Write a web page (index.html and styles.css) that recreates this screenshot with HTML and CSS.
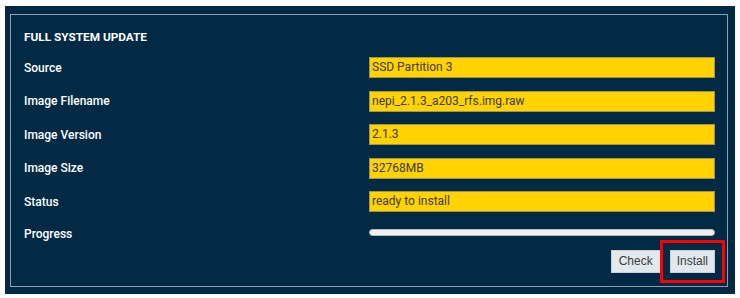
FILE: index.html
```html
<!DOCTYPE html>
<html>
<head>
<meta charset="utf-8">
<link rel="stylesheet" href="styles.css">
</head>
<body>
<div class="frame">
  <div class="panel">
    <div class="title">FULL SYSTEM UPDATE</div>
    <div class="rows">
      <div class="row"><span class="label">Source</span><span class="field">SSD Partition 3</span></div>
      <div class="row"><span class="label">Image Filename</span><span class="field">nepi_2.1.3_a203_rfs.img.raw</span></div>
      <div class="row"><span class="label">Image Version</span><span class="field">2.1.3</span></div>
      <div class="row"><span class="label">Image Size</span><span class="field">32768MB</span></div>
      <div class="row"><span class="label">Status</span><span class="field">ready to install</span></div>
      <div class="row progress-row"><span class="label progress-label">Progress</span><span class="progress"></span></div>
    </div>
    <div class="actions">
      <button class="btn">Check</button>
      <span class="highlight"><button class="btn">Install</button></span>
    </div>
  </div>
</div>
</body>
</html>
```
FILE: styles.css
```css
html, body {
  margin: 0;
  padding: 0;
  background: #ffffff;
}
body {
  padding: 6px 5px 4px 5px;
  font-family: Roboto, "Liberation Sans", sans-serif;
}
.frame {
  background: #032a45;
  padding: 8px 7px 7px 5px;
  height: 288px;
  box-sizing: border-box;
}
.panel {
  border: 1px solid #8d9eae;
  height: 273px;
  box-sizing: border-box;
  padding: 14px 12px 0 13px;
}
.title {
  color: #ffffff;
  font-weight: 700;
  font-size: 11.8px;
  line-height: 16px;
  height: 16px;
  margin-bottom: 12px;
}
.rows {
  display: flex;
  flex-direction: column;
  gap: 12.5px;
}
.row {
  display: flex;
  align-items: center;
  height: 21px;
}
.progress-row {
  height: 16px;
}
.label {
  width: 345px;
  flex: none;
  color: #ffffff;
  font-size: 12px;
  font-weight: 500;
}
.progress-label {
  padding-top: 3px;
}
.field {
  flex: 1;
  height: 21px;
  box-sizing: border-box;
  background: #ffd200;
  border: 1px solid #a39550;
  color: #3a3a2a;
  font-size: 12px;
  line-height: 19px;
  padding-left: 2px;
}
.progress {
  flex: 1;
  height: 7px;
  box-sizing: border-box;
  background: #f0f0f0;
  border: 1px solid #b8b8b8;
  border-radius: 4px;
}
.actions {
  display: flex;
  justify-content: flex-end;
  align-items: center;
  gap: 9px;
  margin-top: 9px;
}
.btn {
  font-family: "Liberation Sans", Arial, sans-serif;
  font-size: 12px;
  color: #3b3b3b;
  background: #e3e8ec;
  border: 1px solid #c9cfd4;
  height: 23px;
  padding: 0 7px;
  margin: 0;
}
.highlight {
  outline: 3px solid #ff0000;
  outline-offset: 7px;
  display: flex;
}
.highlight .btn {
  padding: 0 6px;
}
```
